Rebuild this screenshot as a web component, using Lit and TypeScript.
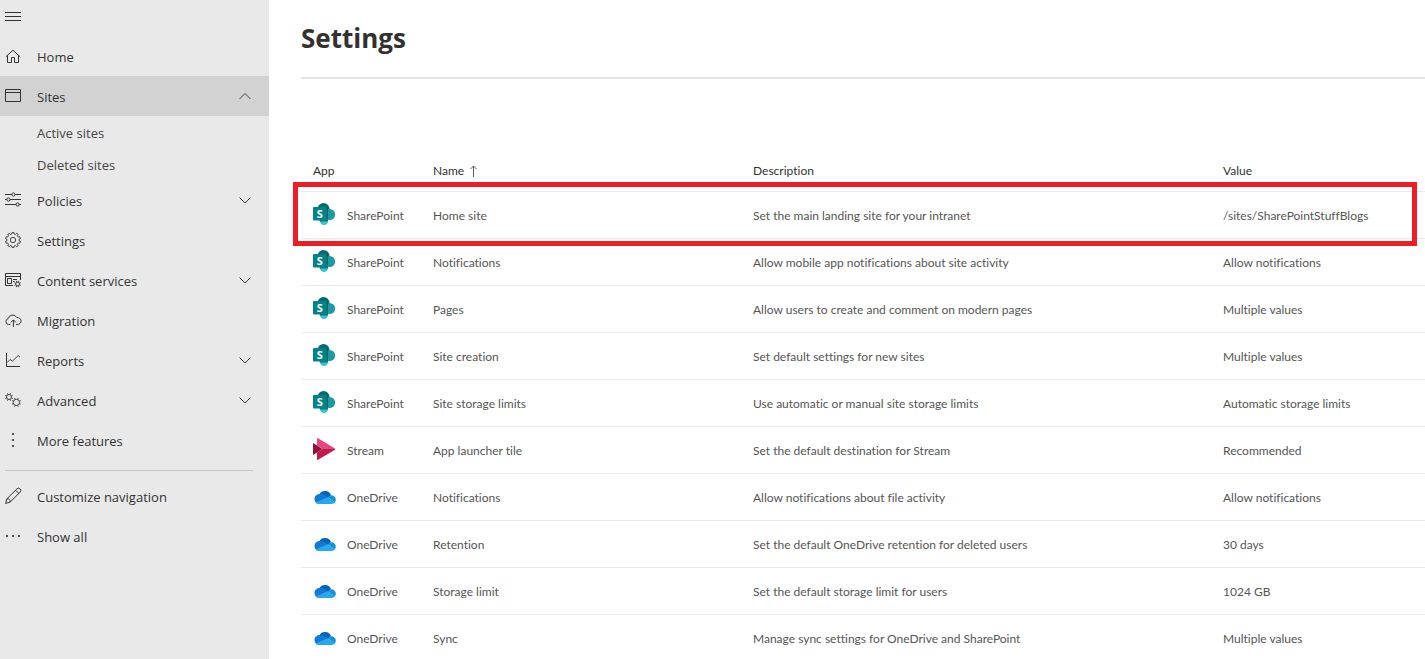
import { LitElement, html, css, svg, nothing, type TemplateResult } from "lit";
import { customElement, property, state } from "lit/decorators.js";
import { classMap } from "lit/directives/class-map.js";

/** Outline of a cog with flat teeth. */
function gear(cx: number, cy: number, outer: number, inner: number, teeth: number): string {
  const step = (Math.PI * 2) / teeth;
  const at = (r: number, a: number) =>
    `${(cx + r * Math.cos(a)).toFixed(2)} ${(cy + r * Math.sin(a)).toFixed(2)}`;
  const points: string[] = [];
  for (let i = 0; i < teeth; i++) {
    const a = i * step - Math.PI / 2;
    points.push(at(inner, a - step * 0.3), at(outer, a - step * 0.2), at(outer, a + step * 0.2), at(inner, a + step * 0.3));
  }
  return `M${points.join("L")}Z`;
}

/** Ring with short spikes, for cogs too small to carry real teeth. */
function cog(cx: number, cy: number, ring: number, tip: number): TemplateResult {
  const spikes = Array.from({ length: 8 }, (_, i) => {
    const a = (i + 0.5) * (Math.PI / 4);
    const at = (r: number) => `${(cx + r * Math.cos(a)).toFixed(2)} ${(cy + r * Math.sin(a)).toFixed(2)}`;
    return `M${at(ring)}L${at(tip)}`;
  }).join("");
  return svg`<g class="thin"><circle cx=${cx} cy=${cy} r=${ring} /><path d=${spikes} /></g>`;
}

const glyphs: Record<string, TemplateResult> = {
  menu: svg`<path d="M0 4.5H16M0 8.5H16M0 12.5H16" />`,
  home: svg`<path d="M1 8.6 8 2.2 15 8.6M2.5 7.5V14.5H6.5V9.5H9.5V14.5H13.5V7.5" />`,
  sites: svg`<path d="M.5 1.5H15.5V13.5H.5ZM.5 4.5H15.5" />`,
  policies: svg`<path d="M0 2.5H6.8M10 2.5H16M0 7.5H1.8M5 7.5H16M0 12.5H11M14.2 12.5H16" />
    <circle cx="8.4" cy="2.5" r="1.6" /><circle cx="3.4" cy="7.5" r="1.6" /><circle cx="12.6" cy="12.5" r="1.6" />`,
  settings: svg`<g class="thin"><path d=${gear(8, 8, 7.6, 6.1, 10)} /><circle cx="8" cy="8" r="2.7" /></g>`,
  content: svg`<path d="M8 13.5H.5V1.5H15.5V8M.5 4.5H15.5M2.5 6.5H6.5V11.5H2.5ZM8 7.5H12M8 9.5H9.5" />
    ${cog(12.6, 12, 1.9, 3.4)}`,
  migration: svg`<path d="M5.5 12.5H3.6A3 3 0 0 1 3.2 6.6A4.6 4.6 0 0 1 11.8 5.6A3.5 3.5 0 1 1 12.2 12.5H11M8.4 15V8M5.9 10.4 8.4 7.9 10.9 10.4" />`,
  reports: svg`<path d="M1.5 1V14.5H15" /><path class="thin" d="M2 10.6 5.2 7.4 7.3 9.2 13.2 3.6 15 5.2" />`,
  advanced: svg`${cog(4, 5, 2.5, 4)}${cog(11.4, 10.4, 3.1, 4.7)}`,
  more: svg`<g class="solid"><rect x="7" y="1" width="2" height="2" /><rect x="7" y="7" width="2" height="2" /><rect x="7" y="13" width="2" height="2" /></g>`,
  pencil: svg`<path d="M.6 15.4 1.8 10.9 11.9.9A1.9 1.9 0 0 1 15.1 4.1L5.1 14.2ZM10.6 2.2 13.8 5.4M1.8 10.9A2.6 2.6 0 0 1 5.1 14.2" />`,
  ellipsis: svg`<g class="solid"><rect x="1" y="7" width="2" height="2" /><rect x="7" y="7" width="2" height="2" /><rect x="13" y="7" width="2" height="2" /></g>`,
};

@customElement("nav-icon")
class NavIcon extends LitElement {
  @property() name = "";
  static styles = css`
    :host { display: block; flex: none; width: 16px; height: 16px; }
    svg { display: block; fill: none; stroke: #333; stroke-width: 1; overflow: visible; }
    .thin { stroke: #444; stroke-width: 1; }
    .solid { fill: #555; stroke: none; }
  `;
  render() {
    return html`<svg width="16" height="16" viewBox="0 0 16 16" aria-hidden="true">${glyphs[this.name]}</svg>`;
  }
}

const logos: Record<string, TemplateResult> = {
  SharePoint: svg`
    <circle cx="10.5" cy="6" r="6" fill="#036c70" />
    <circle cx="16.6" cy="11.5" r="5.5" fill="#1a9ba1" />
    <circle cx="11" cy="17.8" r="4.2" fill="#37c6d0" />
    <path d="M4.5 4.6H15V17.5A1 1 0 0 1 14 18.5H6.8Z" fill="#02494c" opacity=".65" />
    <rect x="0" y="4" width="13.6" height="13.6" rx="1" fill="#038387" />
    <text x="6.8" y="14.8" text-anchor="middle">S</text>`,
  Stream: svg`
    <path d="M0 5 9.6 11 0 17Z" fill="#8b1538" />
    <path d="M4 22V14.5L9.6 11H22Q22.4 11.4 21.6 12L5 21.8Q4 22.3 4 22Z" fill="#c21b4b" />
    <path d="M4 0.4Q4-.3 5 .2L21.6 10.2Q22.4 10.7 22 11H9.6L4 7.5Z" fill="#e8457c" />`,
  OneDrive: svg`
    <path d="M6.2 9.4A6.6 6.6 0 0 1 18 10L14.5 13.5 7 10Z" fill="#0364b8" />
    <path d="M5.4 18.7A4.7 4.7 0 1 1 7.2 9.2Q9.4 8.8 11.2 10L15.2 12.6 3.4 18Z" fill="#1179d6" />
    <path d="M15 12.4 17.3 10.6A4.1 4.1 0 0 1 22.8 14.6Q22.8 16.6 21.7 17.6Z" fill="#1490df" />
    <path d="M2.6 17.4 14.6 12.2 22 17.2Q20.8 19 18.6 19H5.6Q3.8 19 2.6 17.4Z" fill="#28a8ea" />`,
};

@customElement("app-logo")
class AppLogo extends LitElement {
  @property() name = "";
  static styles = css`
    :host { display: block; flex: none; width: 24px; height: 24px; }
    svg { display: block; }
    text { font: 700 11px "Open Sans", sans-serif; fill: #fff; }
  `;
  render() {
    return html`<svg width="24" height="24" viewBox="0 0 24 24" aria-hidden="true">${logos[this.name]}</svg>`;
  }
}

interface NavEntry { label: string; icon: string; group?: boolean; children?: string[]; }

const mainNav: NavEntry[] = [
  { label: "Home", icon: "home" },
  { label: "Sites", icon: "sites", group: true, children: ["Active sites", "Deleted sites"] },
  { label: "Policies", icon: "policies", group: true },
  { label: "Settings", icon: "settings" },
  { label: "Content services", icon: "content", group: true },
  { label: "Migration", icon: "migration" },
  { label: "Reports", icon: "reports", group: true },
  { label: "Advanced", icon: "advanced", group: true },
  { label: "More features", icon: "more" },
];

const footNav: NavEntry[] = [
  { label: "Customize navigation", icon: "pencil" },
  { label: "Show all", icon: "ellipsis" },
];

@customElement("side-nav")
class SideNav extends LitElement {
  @state() private open = "Sites";

  static styles = css`
    :host { display: block; background: #e9e9e9; font: 13px/20px "Open Sans", "Noto Sans", sans-serif; color: #333; }
    ul { list-style: none; margin: 0; padding: 0; }
    button { border: 0; background: none; font: inherit; color: inherit; text-align: left; cursor: pointer; }
    .toggle { display: flex; align-items: center; height: 32px; margin-bottom: 4px; padding: 0 5px; }
    .item { display: flex; align-items: center; gap: 16px; box-sizing: border-box; width: 100%; height: 40px; padding: 0 18px 0 5px; color: inherit; text-decoration: none; }
    .item:hover { background: #dedede; }
    .item.open { background: #d2d2d2; }
    .label { flex: 1; padding-top: 2px; }
    .chevron { width: 12px; height: 8px; fill: none; stroke: #444; }
    .sub { display: flex; align-items: center; height: 32px; padding: 2px 0 0 37px; box-sizing: border-box; color: #484644; text-decoration: none; }
    hr { height: 1px; margin: 10px 16px 5px 5px; border: 0; background: #c6c6c6; }
  `;

  private entry(e: NavEntry) {
    if (!e.group) {
      return html`<li><a class="item" href="#"><nav-icon name=${e.icon}></nav-icon><span class="label">${e.label}</span></a></li>`;
    }
    const open = this.open === e.label;
    return html`<li>
      <button class=${classMap({ item: true, open })} aria-expanded=${open} @click=${() => (this.open = open ? "" : e.label)}>
        <nav-icon name=${e.icon}></nav-icon><span class="label">${e.label}</span>
        <svg class="chevron" viewBox="0 0 12 8" aria-hidden="true"><path d=${open ? "M.5 7 6 1.5 11.5 7" : "M.5 1.5 6 7 11.5 1.5"} /></svg>
      </button>
      ${open && e.children ? html`<ul>${e.children.map((c) => html`<li><a class="sub" href="#">${c}</a></li>`)}</ul>` : nothing}
    </li>`;
  }

  render() {
    return html`<nav aria-label="Admin center">
      <button class="toggle" aria-label="Collapse navigation"><nav-icon name="menu"></nav-icon></button>
      <ul>${mainNav.map((e) => this.entry(e))}</ul>
      <hr />
      <ul>${footNav.map((e) => this.entry(e))}</ul>
    </nav>`;
  }
}

interface Setting { app: string; name: string; description: string; value: string; marked?: boolean; }

const settings: Setting[] = [
  { app: "SharePoint", name: "Home site", description: "Set the main landing site for your intranet", value: "/sites/SharePointStuffBlogs", marked: true },
  { app: "SharePoint", name: "Notifications", description: "Allow mobile app notifications about site activity", value: "Allow notifications" },
  { app: "SharePoint", name: "Pages", description: "Allow users to create and comment on modern pages", value: "Multiple values" },
  { app: "SharePoint", name: "Site creation", description: "Set default settings for new sites", value: "Multiple values" },
  { app: "SharePoint", name: "Site storage limits", description: "Use automatic or manual site storage limits", value: "Automatic storage limits" },
  { app: "Stream", name: "App launcher tile", description: "Set the default destination for Stream", value: "Recommended" },
  { app: "OneDrive", name: "Notifications", description: "Allow notifications about file activity", value: "Allow notifications" },
  { app: "OneDrive", name: "Retention", description: "Set the default OneDrive retention for deleted users", value: "30 days" },
  { app: "OneDrive", name: "Storage limit", description: "Set the default storage limit for users", value: "1024 GB" },
  { app: "OneDrive", name: "Sync", description: "Manage sync settings for OneDrive and SharePoint", value: "Multiple values" },
];

@customElement("settings-table")
class SettingsTable extends LitElement {
  static styles = css`
    :host { display: block; font: 12px/16px Lato, "Open Sans", sans-serif; font-variant-ligatures: none; color: #555; }
    table { width: 100%; border-collapse: separate; border-spacing: 0; table-layout: fixed; }
    .app { width: 120px; }
    .name { width: 320px; }
    .description { width: 470px; }
    th, td { box-sizing: border-box; padding: 0 0 0 12px; text-align: left; font-weight: 400; border-bottom: 1px solid #eaeaea; white-space: nowrap; }
    th { height: 42px; color: #323130; }
    td { height: 47px; padding-top: 2px; }
    td:first-child { padding-top: 0; }
    .sort { display: inline-flex; align-items: center; gap: 6px; padding: 0; border: 0; background: none; font: inherit; color: inherit; }
    .arrow { width: 7px; height: 12px; fill: none; stroke: #605e5c; }
    .product { display: flex; align-items: center; gap: 10px; }
    .product span { padding-top: 2px; }
    .marked { position: relative; }
    .mark { position: absolute; inset: -10px 8px -7px -8px; border: 5px solid #ee1c25; pointer-events: none; }
  `;
  render() {
    return html`<table>
      <thead><tr>
        <th class="app" scope="col">App</th>
        <th class="name" scope="col" aria-sort="ascending"><button class="sort">Name
          <svg class="arrow" viewBox="0 0 7 12" aria-hidden="true"><path d="M3.5 12V1M.5 4 3.5 1 6.5 4" /></svg></button></th>
        <th class="description" scope="col">Description</th>
        <th scope="col">Value</th>
      </tr></thead>
      <tbody>${settings.map((s) => html`<tr class=${classMap({ marked: !!s.marked })}>
        <td><div class="product"><app-logo name=${s.app}></app-logo><span>${s.app}</span></div>${s.marked ? html`<div class="mark"></div>` : nothing}</td>
        <td>${s.name}</td>
        <td>${s.description}</td>
        <td>${s.value}</td>
      </tr>`)}</tbody>
    </table>`;
  }
}

@customElement("app-root")
class AppRoot extends LitElement {
  static styles = css`
    :host { display: grid; grid-template-columns: 269px minmax(0, 1fr); height: 100vh; background: #fff; }
    side-nav, main { overflow-y: auto; scrollbar-width: none; }
    main { padding-left: 32px; }
    h1 { margin: 0; padding: 20px 0; border-bottom: 2px solid #e4e4e4; font: 700 26px/37px "Open Sans", "Noto Sans", sans-serif; color: #323130; }
    settings-table { margin-top: 71px; }
  `;
  render() {
    return html`<side-nav></side-nav>
      <main><h1>Settings</h1><settings-table></settings-table></main>`;
  }
}
